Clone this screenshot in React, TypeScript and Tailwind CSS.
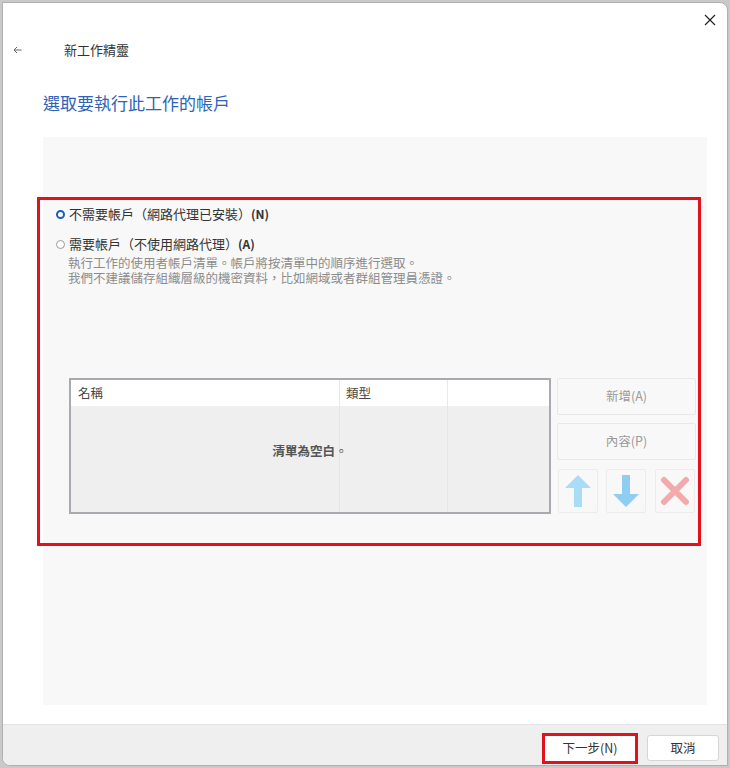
import React from "react";

const font = { fontFamily: '"Noto Sans CJK TC", "Noto Sans", sans-serif' };

function UpArrow() {
  return (
    <svg width="26" height="32" viewBox="0 0 26 32">
      <polygon points="13,0 26,13 17,13 17,32 9,32 9,13 0,13" fill="#a9dcf7" />
    </svg>
  );
}
function DownArrow() {
  return (
    <svg width="26" height="32" viewBox="0 0 26 32">
      <polygon points="9,0 17,0 17,19 26,19 13,32 0,19 9,19" fill="#8fcdf3" />
    </svg>
  );
}
function RedX() {
  return (
    <svg width="30" height="30" viewBox="0 0 30 30">
      <path d="M4 4 L26 26 M26 4 L4 26" stroke="#f2aaaa" strokeWidth="6" strokeLinecap="round" />
    </svg>
  );
}

export default function App() {
  return (
    <div className="w-[730px] h-[768px] bg-[#c9c9c9] pt-[2px] pl-[2px] overflow-hidden" style={font}>
      <div className="w-[726px] h-[764px] bg-white border border-[#b0b0b0] rounded-tr-[8px] rounded-bl-[8px] flex flex-col overflow-hidden">
        <div className="h-[34px] flex items-start justify-end pt-[11px] pr-[11px] shrink-0">
          <svg width="12" height="12" viewBox="0 0 12 12">
            <path d="M1 1 L11 11 M11 1 L1 11" stroke="#222" strokeWidth="1.2" />
          </svg>
        </div>
        <div className="h-[26px] flex items-center shrink-0">
          <svg className="ml-[10px]" width="9" height="8" viewBox="0 0 9 8">
            <path d="M8.5 4 H1 M4 1 L1 4 L4 7" stroke="#666" strokeWidth="1" fill="none" />
          </svg>
          <span className="ml-[42px] text-[13px] text-[#333]">新工作精靈</span>
        </div>
        <div className="mt-[28px] pl-[40px] h-[24px] flex items-center text-[17px] text-[#2e63b6] shrink-0">
          選取要執行此工作的帳戶
        </div>
        <div className="mt-[22px] ml-[40px] w-[664px] h-[568px] bg-[#f8f8f8] pt-[60px] shrink-0">
          <div className="-ml-[6px] w-[664px] h-[349px] border-[3px] border-[#e3111b] flex flex-col">
            <div className="mt-[6px] h-[16px] flex items-center pl-[16px] text-[13px] text-[#333]">
              <span className="w-[9px] h-[9px] rounded-full border-[2.5px] border-[#1a5fb4] bg-white" />
              <span className="ml-[4px]">不需要帳戶（網路代理已安裝）<span className="font-bold text-[12px]">(N)</span></span>
            </div>
            <div className="mt-[14px] h-[16px] flex items-center pl-[16px] text-[13px] text-[#333]">
              <span className="w-[9px] h-[9px] rounded-full border border-[#9a9a9a] bg-white" />
              <span className="ml-[4px]">需要帳戶（不使用網路代理）<span className="font-bold text-[12px]">(A)</span></span>
            </div>
            <div className="mt-[3px] pl-[28px] text-[12.5px] leading-[15px] text-[#8c8c8c]">
              <div>執行工作的使用者帳戶清單。帳戶將按清單中的順序進行選取。</div>
              <div>我們不建議儲存組織層級的機密資料，比如網域或者群組管理員憑證。</div>
            </div>
            <div className="mt-[93px] pl-[29px] flex">
              <div className="w-[482px] h-[136px] border-2 border-[#a7abaf] flex flex-col relative shrink-0">
                <div className="h-[26px] bg-white flex text-[12.5px] text-[#444] shrink-0">
                  <div className="w-[269px] pl-[7px] flex items-center border-r border-[#e6e9ec]">名稱</div>
                  <div className="w-[108px] pl-[6px] flex items-center border-r border-[#e6e9ec]">類型</div>
                  <div className="flex-1" />
                </div>
                <div className="flex-1 bg-[#efefef] flex">
                  <div className="w-[269px] border-r border-[#e2e6ea]" />
                  <div className="w-[108px] border-r border-[#e2e6ea]" />
                  <div className="flex-1" />
                </div>
                <div className="absolute left-0 right-0 top-[62px] flex justify-center text-[12.5px] font-bold text-[#555]">
                  清單為空白 <span className="font-normal">。</span>
                </div>
              </div>
              <div className="ml-[6px] w-[139px] flex flex-col">
                <div className="h-[37px] bg-[#f8f8f8] border border-[#e8e8e8] rounded-[2px] flex items-center justify-center text-[12.5px] text-[#9a9a9a]">
                  新增(A)
                </div>
                <div className="mt-[8px] h-[37px] bg-[#f8f8f8] border border-[#e8e8e8] rounded-[2px] flex items-center justify-center text-[12.5px] text-[#9a9a9a]">
                  內容(P)
                </div>
                <div className="mt-[9px] h-[44px] flex">
                  <div className="ml-[1px] w-[40px] h-[44px] border border-[#ececec] rounded-[2px] flex items-center justify-center">
                    <UpArrow />
                  </div>
                  <div className="ml-[8px] w-[40px] h-[44px] border border-[#ececec] rounded-[2px] flex items-center justify-center">
                    <DownArrow />
                  </div>
                  <div className="ml-[9px] w-[40px] h-[44px] border border-[#ececec] rounded-[2px] flex items-center justify-center">
                    <RedX />
                  </div>
                </div>
              </div>
            </div>
          </div>
        </div>
        <div className="mt-[19px] flex-1 bg-[#efefef] border-t border-[#e3e3e3] flex justify-end items-start pt-[8px] pr-[8px]">
          <div className="w-[96px] h-[31px] border-[3px] border-[#e3111b] bg-white flex items-center justify-center text-[12.5px] text-[#333]">
            下一步(N)
          </div>
          <div className="ml-[9px] mt-[2px] w-[72px] h-[26px] bg-white border border-[#d6d6d6] rounded-[3px] flex items-center justify-center text-[12.5px] text-[#333]">
            取消
          </div>
        </div>
      </div>
    </div>
  );
}
